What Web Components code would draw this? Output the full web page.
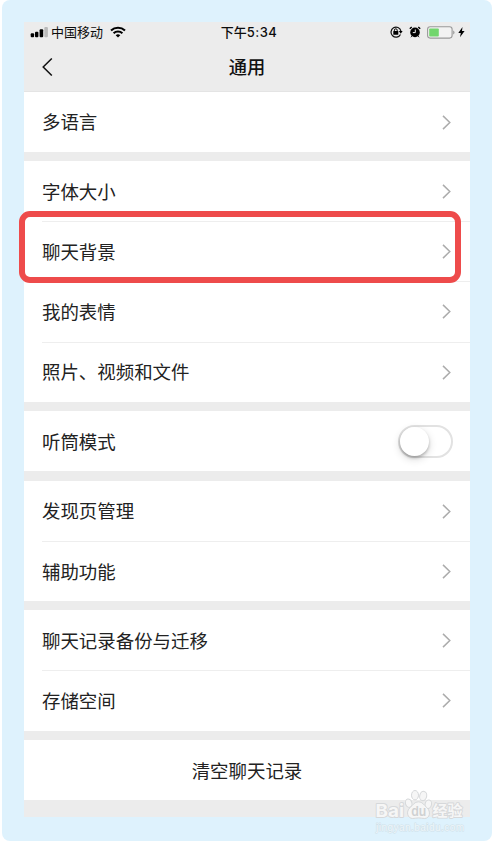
<!DOCTYPE html>
<html lang="zh-CN">
<head>
<meta charset="utf-8">
<title>通用</title>
<style>
  body {
    margin: 0;
    background: #fff;
    overflow: hidden;
  }
</style>
</head>
<body>
<settings-page></settings-page>

<script>
const define = (name, html, setup) => {
  const template = document.createElement('template')
  template.innerHTML = html

  customElements.define(name, class extends HTMLElement {
    constructor() {
      super()
      this.attachShadow({mode: 'open'})
      this.shadowRoot.appendChild(template.content.cloneNode(true))
    }

    connectedCallback() {
      if (setup) setup(this)
    }
  })
}

define('status-bar', `
  <style>
    :host {
      display: grid;
      grid-template-columns: 1fr auto 1fr;
      align-items: center;
      height: 21px;
      padding: 0 5px 0 6px;
      font-size: 13px;
      line-height: 20px;
      color: #0c0c0c;
    }
    .side { display: flex; align-items: center; }
    .carrier { margin: 0 7px 0 3px; }
    .right { justify-content: flex-end; }
    .time { padding-left: 3px; font-weight: 500; letter-spacing: .1px; }
    .time b { font-family: Inter, sans-serif; font-weight: 500; letter-spacing: .45px; }
    svg { display: block; flex: none; }
  </style>
  <div class="side">
    <svg width="18" height="12" viewBox="0 0 18 12">
      <rect x=".7" y="7.3" width="3.4" height="4" rx="1"/>
      <rect x="5" y="5.7" width="3.4" height="5.6" rx="1"/>
      <rect x="9.6" y="3.3" width="3.6" height="8" rx="1"/>
      <rect x="14.3" y="1" width="3.6" height="10.3" rx="1" fill="#b9b9b9"/>
    </svg>
    <span class="carrier">中国移动</span>
    <svg width="16" height="12" viewBox="0 0 16 12" fill="none" stroke="#000" stroke-width="2.1">
      <path d="M1 4.5a10.2 10.2 0 0 1 14 0M3.6 7.3a6.4 6.4 0 0 1 8.8 0"/>
      <path d="M8 11.5L5.7 9.2a3.4 3.4 0 0 1 4.6 0z" fill="#000" stroke="none"/>
    </svg>
  </div>
  <div class="time">下午<b>5:34</b></div>
  <div class="side right">
    <svg width="13" height="12" viewBox="0 0 13 12">
      <path d="M10.5 8.4A5 5 0 1 1 10.9 5" fill="none" stroke="#111" stroke-width="1.2"/>
      <path d="M8.8 5.1h3.8l-1.8 2.7z"/>
      <rect x="3.3" y="5.1" width="5" height="3.7" rx=".5"/>
      <path d="M4.4 5.3V4.2a1.4 1.4 0 0 1 2.8 0v1.1" fill="none" stroke="#000"/>
    </svg>
    <svg width="12" height="12" viewBox="0 0 12 12" style="margin:0 6px 0 6px">
      <circle cx="6" cy="6.4" r="4.8"/>
      <path d="M.8 2.8L2.7.9M11.2 2.8L9.3.9" stroke="#000" stroke-width="1.4"/>
      <path d="M2.8 10.2l-.9 1M9.2 10.2l.9 1" stroke="#000" stroke-width="1"/>
      <path d="M6.3 3.5v3.1H3.8" fill="none" stroke="#ececec" stroke-width="1"/>
    </svg>
    <svg width="28" height="13" viewBox="0 0 28 13">
      <rect x=".6" y=".8" width="24.5" height="11.3" rx="2.5" fill="#f2f2f2" stroke="#999" stroke-width="1.1"/>
      <rect x="2.2" y="2.4" width="9.6" height="8.1" rx=".8" fill="#72d66d"/>
      <path d="M26.2 4.5q1.3.5 1.3 2t-1.3 2z" fill="#999"/>
    </svg>
    <svg width="7" height="12" viewBox="0 0 7 12" style="margin-left:3px">
      <path d="M4.5.9L.3 6.9h2.5L2 11.3l4.6-6.2H4z"/>
    </svg>
  </div>
`)

define('nav-bar', `
  <style>
    :host {
      display: grid;
      grid-template-columns: 48px 1fr 48px;
      align-items: center;
      height: 49px;
      box-sizing: border-box;
      border-bottom: 1px solid #e4e4e4;
      font-size: 18.3px;
      font-weight: 500;
      line-height: 26px;
      text-align: center;
      color: #111;
    }
    span { padding-bottom: 2px; }
    svg { display: block; margin-left: 18px; }
  </style>
  <svg width="11" height="18" viewBox="0 0 11 18" fill="none" stroke="#111" stroke-width="1.5">
    <path d="M9.8.5L1.2 9l8.6 8.5"/>
  </svg>
  <span><slot></slot></span>
`)

define('cell-group', `
  <style>
    :host {
      display: block;
      background: #fff;
      margin-bottom: 9.3px;
    }
    :host(:last-child) { margin-bottom: 0; }
  </style>
  <slot></slot>
`)

define('setting-cell', `
  <style>
    :host {
      display: block;
      height: 60.2px;
      padding-left: 18px;
      font-size: 18.45px;
      color: #222;
    }
    .row {
      display: flex;
      align-items: center;
      justify-content: space-between;
      height: 100%;
      box-sizing: border-box;
      padding-right: 19px;
      border-top: 1px solid transparent;
      line-height: 28px;
    }
    .label { padding-bottom: 1.6px; }
    :host(:not(:first-child)) .row { border-top-color: #eee; }
    :host([center]) { padding-left: 0; }
    :host([center]) .row { justify-content: center; padding-right: 0; }
    :host([center]) svg, :host([switch]) svg { display: none; }
    :host([switch]) .row { padding-right: 17px; }
  </style>
  <div class="row">
    <span class="label"><slot></slot></span>
    <slot name="control"></slot>
    <svg width="9" height="15" viewBox="0 0 9 15" fill="none" stroke="#acacac" stroke-width="1.5">
      <path d="M1 .9l6.8 6.6L1 14.1"/>
    </svg>
  </div>
`)

define('toggle-switch', `
  <style>
    :host {
      display: block;
      width: 55px;
      height: 33px;
      box-sizing: border-box;
      border: 2px solid #e2e2e2;
      border-radius: 17px;
      background: #fff;
    }
    i {
      display: block;
      width: 29px;
      height: 29px;
      border-radius: 50%;
      background: #fff;
      box-shadow: 0 2px 3px rgba(0, 0, 0, .22), 0 3px 9px rgba(0, 0, 0, .16);
    }
  </style>
  <i></i>
`, el => {
  el.setAttribute('role', 'switch')
  el.setAttribute('aria-checked', 'false')
})

define('focus-frame', `
  <style>
    :host {
      position: absolute;
      left: 19px;
      top: 211px;
      width: 442px;
      height: 72px;
      box-sizing: border-box;
      border: 6px solid #ee4b4b;
      border-radius: 11px;
      pointer-events: none;
    }
  </style>
`)

define('site-mark', `
  <style>
    :host {
      position: absolute;
      left: 374px;
      top: 789px;
      width: 94px;
      height: 46px;
    }
    svg { display: block; }
    text { paint-order: stroke; stroke-linejoin: round; }
  </style>
  <svg width="94" height="46" viewBox="0 0 94 46" fill="#f6f6f6" stroke="#d6d8da" stroke-width="1.8">
    <text x="1.5" y="28" font-family="Inter, sans-serif" font-weight="700" font-size="18" textLength="28.5" lengthAdjust="spacingAndGlyphs">Bai</text>
    <g stroke-width="1">
      <ellipse cx="34.7" cy="14.2" rx="3.2" ry="4.3" transform="rotate(-15 34.7 14.2)"/>
      <ellipse cx="41" cy="6.2" rx="3.5" ry="4.7"/>
      <ellipse cx="49.2" cy="7" rx="3.5" ry="4.7" transform="rotate(12 49.2 7)"/>
      <ellipse cx="54.3" cy="15.2" rx="3.2" ry="4.3" transform="rotate(12 54.3 15.2)"/>
      <path d="M44.5 12.8c-4.2 0-5.4 3.2-8.4 5.8-4.7 4.1-2.4 10.9 2.5 10.9 2.4 0 3.9-.6 6-.6s3.6.6 6 .6c5.1 0 6.7-6.8 2.3-10.9-3.2-2.6-4.2-5.8-8.4-5.8z"/>
    </g>
    <text x="37.2" y="27" font-family="Inter, sans-serif" font-size="13" font-weight="600" fill="#cfd1d2" stroke="none" textLength="15" lengthAdjust="spacingAndGlyphs">du</text>
    <text x="58.5" y="27.2" font-family="Noto Sans CJK SC, sans-serif" font-size="15" font-weight="700">经验</text>
    <text x="2" y="41.5" font-family="Liberation Sans, sans-serif" font-size="10" fill="#eef6fa" stroke="#cfe0e8" stroke-width="1" textLength="88">jingyan.baidu.com</text>
  </svg>
`)

define('settings-page', `
  <style>
    :host {
      position: relative;
      display: block;
      width: 490px;
      height: 841px;
      margin-left: 2px;
      box-sizing: border-box;
      padding: 21.5px 22px 24px;
      border-radius: 8px;
      background: #def2fd;
      font-family: "Noto Sans CJK SC", sans-serif;
    }
    main {
      height: 795.5px;
      background: #ececec;
    }
    .overlay {
      position: absolute;
      left: -2px;
      top: 0;
    }
  </style>
  <main>
    <status-bar></status-bar>
    <nav-bar>通用</nav-bar>
    <div>
      <cell-group>
        <setting-cell>多语言</setting-cell>
      </cell-group>
      <cell-group>
        <setting-cell>字体大小</setting-cell>
        <setting-cell>聊天背景</setting-cell>
        <setting-cell>我的表情</setting-cell>
        <setting-cell>照片、视频和文件</setting-cell>
      </cell-group>
      <cell-group>
        <setting-cell switch>听筒模式<toggle-switch slot="control"></toggle-switch></setting-cell>
      </cell-group>
      <cell-group>
        <setting-cell>发现页管理</setting-cell>
        <setting-cell>辅助功能</setting-cell>
      </cell-group>
      <cell-group>
        <setting-cell>聊天记录备份与迁移</setting-cell>
        <setting-cell>存储空间</setting-cell>
      </cell-group>
      <cell-group>
        <setting-cell center>清空聊天记录</setting-cell>
      </cell-group>
    </div>
  </main>
  <div class="overlay">
    <focus-frame></focus-frame>
    <site-mark></site-mark>
  </div>
`)
</script>
</body>
</html>
